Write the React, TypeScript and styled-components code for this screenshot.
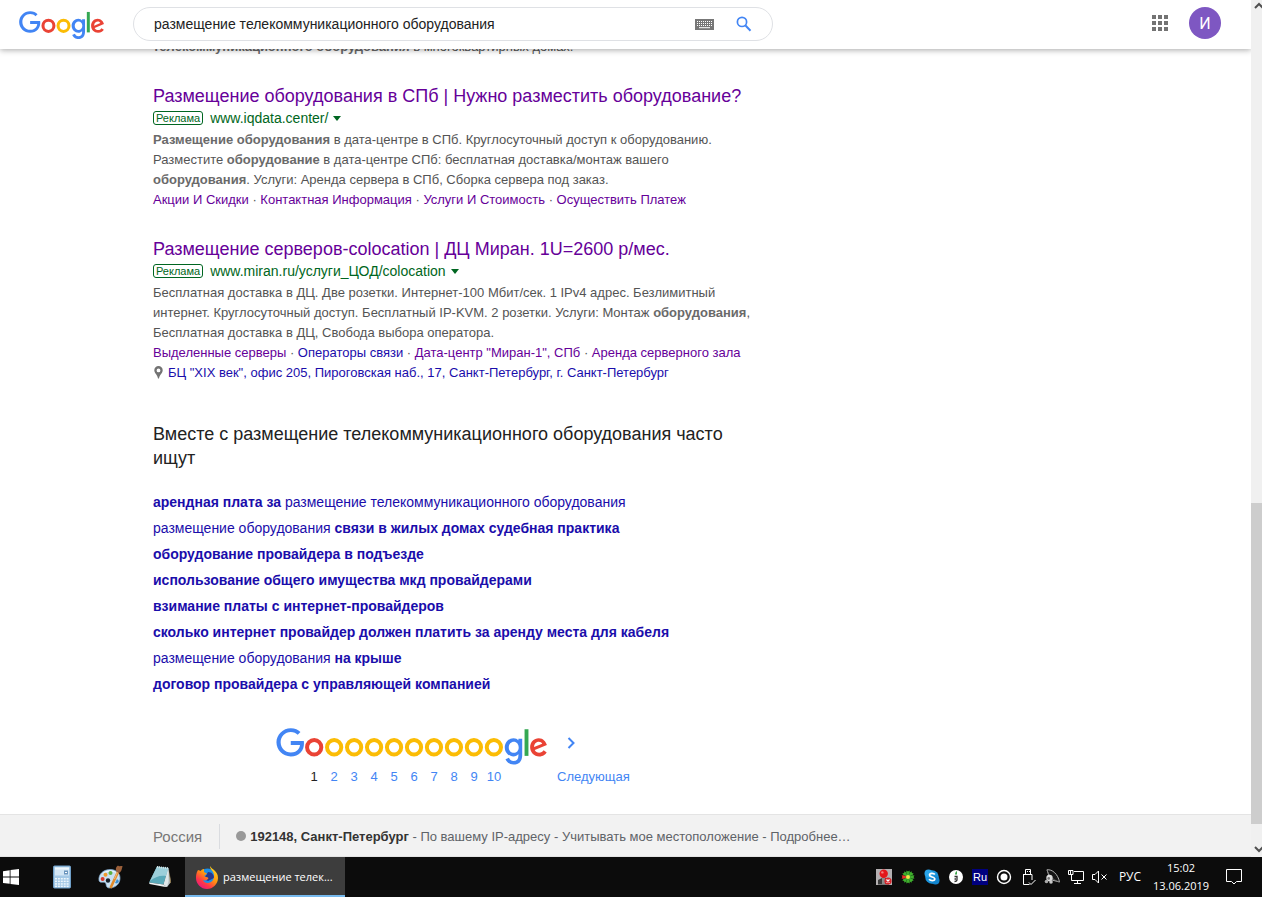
import React from "react";
import styled, { createGlobalStyle } from "styled-components";

const GlobalStyle = createGlobalStyle`
  * { box-sizing: border-box; }
  body { margin: 0; background: #fff; font-family: "Liberation Sans", Arial, sans-serif; overflow: hidden; }
  button { border: 0; padding: 0; background: none; font: inherit; color: inherit; cursor: pointer; }
  a { text-decoration: none; }
  svg { display: block; flex: none; }
  h2, h3, p, ul, ol { margin: 0; padding: 0; font-weight: normal; }
  ul, ol { list-style: none; }
`;

const Desktop = styled.div`
  display: flex;
  flex-direction: column;
  height: 100vh;
`;

const BrowserView = styled.div`
  display: flex;
  flex: 1;
  min-height: 0;
`;

const Page = styled.div`
  display: flex;
  flex-direction: column;
  flex: 1;
  min-width: 0;
  overflow: hidden;
`;

const Header = styled.header`
  position: relative;
  z-index: 1;
  display: flex;
  flex: none;
  align-items: center;
  height: 49px;
  padding: 0 30px 1px 19px;
  background: #fff;
  box-shadow: 0 1px 6px rgba(0, 0, 0, 0.35);
`;

const LogoLink = styled.a`
  width: 114px;
  padding-top: 2px;
`;

const SearchForm = styled.form`
  display: flex;
  align-items: center;
  width: 640px;
  height: 34px;
  padding: 0 20px;
  border: 1px solid #dfe1e5;
  border-radius: 17px;
`;

const SearchInput = styled.input`
  flex: 1;
  min-width: 0;
  padding: 0;
  border: 0;
  outline: 0;
  background: none;
  color: #222;
  font: 14px "Liberation Sans", Arial, sans-serif;
`;

const SearchTool = styled.button`
  margin-left: 22px;
`;

const AccountTools = styled.div`
  display: flex;
  align-items: center;
  gap: 21px;
  margin-left: auto;
  padding-bottom: 2px;
`;

const Avatar = styled.button`
  width: 32px;
  height: 32px;
  border-radius: 50%;
  background: #7e57c2;
  color: #fff;
  font: 16px Roboto, sans-serif;
`;

const Main = styled.main`
  flex: 1;
  min-height: 0;
  margin-top: -12px;
  padding-left: 153px;
`;

const Results = styled.div`
  max-width: 602px;
`;

const Snippet = styled.p`
  color: #545454;
  font-size: 13px;
  line-height: 20px;
  b { color: #6a6a6a; }
`;

const Ad = styled.article`
  margin-top: 27px;
`;

const AdTitle = styled.h3`
  font-size: 18px;
  line-height: 24px;
  white-space: nowrap;
`;

const TextLink = styled.a<{ $visited?: boolean }>`
  color: ${(p) => (p.$visited ? "#609" : "#1a0dab")};
`;

const AdSource = styled.div`
  display: flex;
  align-items: center;
  height: 20px;
  margin-bottom: 2px;
  color: #006621;
  font-size: 14px;
`;

const AdBadge = styled.span`
  height: 14px;
  margin-right: 7px;
  padding: 0 2px;
  border: 1px solid #006621;
  border-radius: 3px;
  font-size: 11px;
  line-height: 13px;
`;

const SourceMenu = styled.button`
  margin-left: 5px;
`;

const AddressRow = styled.div`
  display: flex;
  align-items: center;
  gap: 5px;
  padding-left: 1px;
  font-size: 13px;
  line-height: 20px;
`;

const RelatedHeading = styled.h2`
  margin-top: 39px;
  color: #222;
  font-size: 18px;
  line-height: 24px;
`;

const RelatedList = styled.ul`
  margin-top: 19px;
  font-size: 14px;
  line-height: 26px;
`;

const Pager = styled.nav`
  display: flex;
  gap: 9px;
  margin: 31px 0 28px 123px;
  font-size: 13px;
  line-height: 20px;
`;

const PageNumbers = styled.ol`
  display: flex;
  padding-left: 28px;
`;

const PageNumber = styled.li<{ $current?: boolean }>`
  width: 20px;
  text-align: center;
  a { color: ${(p) => (p.$current ? "#222" : "#4285f4")}; }
`;

const NextLink = styled.a`
  display: flex;
  flex-direction: column;
  justify-content: space-between;
  padding-top: 9px;
  color: #4285f4;
  svg { margin-left: 10px; }
`;

const Footer = styled.footer`
  display: flex;
  flex: none;
  align-items: center;
  height: 43px;
  padding: 1px 0 0 153px;
  border-top: 1px solid #e4e4e4;
  border-bottom: 1px solid #e4e4e4;
  background: #f2f2f2;
  color: #5f6368;
  font-size: 13px;
  white-space: nowrap;
  b { color: #333; }
  a { color: #5f6368; }
`;

const Country = styled.span`
  margin-right: 16px;
  padding-right: 17px;
  border-right: 1px solid #dadce0;
  color: #777;
  font-size: 15px;
  line-height: 25px;
`;

const LocationDot = styled.span`
  width: 10px;
  height: 10px;
  margin-right: 4px;
  border-radius: 50%;
  background: #999;
`;

const ScrollTrack = styled.div`
  display: flex;
  flex-direction: column;
  flex: none;
  width: 11px;
  background: #f0f0f0;
`;

const ScrollArrow = styled.button`
  flex: none;
  height: 17px;
`;

const ScrollThumb = styled.div`
  flex: 321;
  background: #cdcdcd;
`;

const ScrollSpace = styled.div<{ $share: number }>`
  flex: ${(p) => p.$share};
`;

const Taskbar = styled.div`
  display: flex;
  flex: none;
  align-items: stretch;
  height: 40px;
  background: #0c0c0c;
  color: #fff;
  font: 12px/18px "Open Sans", "Noto Sans", sans-serif;
`;

const LaunchButton = styled.button<{ $start?: boolean }>`
  display: flex;
  align-items: center;
  justify-content: center;
  width: ${(p) => (p.$start ? "37px" : "49px")};
  padding-right: ${(p) => (p.$start ? "15px" : "0")};
`;

const WindowButton = styled.button`
  display: flex;
  align-items: center;
  gap: 5px;
  width: 160px;
  padding: 2px 8px 0 11px;
  margin-left: 1px;
  border-bottom: 2px solid #76b9ed;
  background: #3d3d3d;
  font-size: 11px;
  white-space: nowrap;
`;

const Tray = styled.div`
  display: flex;
  align-items: center;
  margin-left: auto;
`;

const TrayButton = styled.button`
  display: flex;
  justify-content: center;
  width: 24px;
`;

const Language = styled.button`
  width: 36px;
`;

const Clock = styled.button`
  width: 66px;
  font-size: 11px;
  text-align: center;
`;

const NoticeButton = styled.button`
  display: flex;
  justify-content: center;
  width: 40px;
  margin-right: 8px;
`;

const G_PATH =
  "M35.29 41.41V32H67c.31 1.64.47 3.58.47 5.68 0 7.06-1.93 15.79-8.15 22.01-6.05 6.3-13.78 9.66-24.02 9.66C16.32 69.35.36 53.89.36 34.91.36 15.93 16.32.47 35.3.47c10.5 0 17.98 4.12 23.6 9.49l-6.64 6.64c-4.03-3.78-9.49-6.72-16.97-6.72-13.86 0-24.7 11.17-24.7 25.03 0 13.86 10.84 25.03 24.7 25.03 8.99 0 14.11-3.61 17.39-6.89 2.66-2.66 4.41-6.46 5.1-11.65l-22.49.01z";
const TAIL_G =
  "M209.75 26.34v39.82c0 16.38-9.66 23.07-21.08 23.07-10.75 0-17.22-7.19-19.66-13.07l8.48-3.53c1.51 3.61 5.21 7.87 11.17 7.87 7.31 0 11.84-4.51 11.84-13v-3.19h-.34c-2.18 2.69-6.38 5.04-11.68 5.04-11.09 0-21.25-9.66-21.25-22.09 0-12.52 10.16-22.26 21.25-22.26 5.29 0 9.49 2.35 11.68 4.96h.34v-3.61h9.25zm-8.56 20.92c0-7.81-5.21-13.52-11.84-13.52-6.72 0-12.35 5.71-12.35 13.52 0 7.73 5.63 13.36 12.35 13.36 6.63 0 11.84-5.63 11.84-13.36z";
const TAIL_E =
  "M262.02 54.48l7.56 5.04c-2.44 3.61-8.32 9.83-18.48 9.83-12.6 0-22.01-9.74-22.01-22.18 0-13.19 9.49-22.18 20.92-22.18 11.51 0 17.14 9.16 18.98 14.11l1.01 2.52-29.65 12.28c2.27 4.45 5.8 6.72 10.75 6.72 4.96 0 8.4-2.44 10.92-6.14zm-23.27-7.98l19.82-8.23c-1.09-2.77-4.37-4.7-8.23-4.7-4.95 0-11.84 4.37-11.59 12.93z";

const Ring = ({ cx, color }: { cx: number; color: string }) => (
  <ellipse cx={cx} cy="47.18" rx="17.4" ry="17.7" fill="none" stroke={color} strokeWidth="9.7" />
);

const LogoTail = () => (
  <>
    <path fill="#4285f4" d={TAIL_G} />
    <path fill="#34a853" d="M225 3v65h-9.5V3z" />
    <path fill="#ea4335" d={TAIL_E} />
  </>
);

const Logo = () => (
  <svg width="85" height="28" viewBox="0 0 270 89" aria-hidden="true">
    <path fill="#4285f4" d={G_PATH} />
    <Ring cx={93.5} color="#ea4335" />
    <Ring cx={141.5} color="#fbbc05" />
    <LogoTail />
  </svg>
);

const PagerLogo = () => (
  <svg width="272" height="39" viewBox="0 0 272 39" aria-hidden="true">
    <g transform="translate(.3 0) scale(.41)">
      <path fill="#4285f4" d={G_PATH} />
      {[0, 1, 2, 3, 4, 5, 6, 7, 8, 9].map((i) => (
        <Ring key={i} cx={92.4 + i * 48.7} color={i ? "#fbbc05" : "#ea4335"} />
      ))}
      <g transform="translate(390 0)">
        <LogoTail />
      </g>
    </g>
  </svg>
);

const KeyboardIcon = () => (
  <svg width="19" height="11" viewBox="0 0 19 11">
    <rect width="19" height="11" fill="#777" />
    <path d="M2 2.5h15M2 4.5h15M2 6.5h15" stroke="#fff" strokeDasharray="1 1" />
    <path d="M4 8.7h11" stroke="#fff" />
  </svg>
);

const SearchIcon = () => (
  <svg width="16" height="16" viewBox="0 0 16 16" fill="none" stroke="#4285f4">
    <circle cx="6" cy="5.9" r="4.6" strokeWidth="1.7" />
    <path d="m9.5 9.5 5 5.2" strokeWidth="2" />
  </svg>
);

const AppsIcon = () => (
  <svg width="16" height="16" viewBox="0 0 16 16" fill="#737373">
    {[0, 6, 12].map((y) => [0, 6, 12].map((x) => <rect key={`${x}-${y}`} x={x} y={y} width="4" height="4" />))}
  </svg>
);

const CaretIcon = () => (
  <svg width="8" height="5" viewBox="0 0 8 5">
    <path d="M0 0h8L4 5z" fill="#006621" />
  </svg>
);

const PinIcon = () => (
  <svg width="9" height="14" viewBox="0 0 9 14">
    <path fillRule="evenodd" fill="#737373" d="M4.500 0A4.200 4.200 0 0 0 .3 4.200C.3 7 3.500 8.800 4 12.500h1c.5-3.700 3.700-5.500 3.700-8.300A4.200 4.200 0 0 0 4.500 0zm0 2.500a1.900 1.900 0 1 1 0 3.800 1.900 1.900 0 0 1 0-3.800z" />
  </svg>
);

const StartIcon = () => (
  <svg width="16" height="16" viewBox="0 0 16 16" fill="#fff">
    <path d="M0 2.200 6.700 1.200v6.300H0zM7.500 1.100 16 0v7.500H7.500zM0 8.400h6.700v6.400L0 13.900zM7.500 8.400H16V16l-8.500-1.100z" />
  </svg>
);

const CalculatorIcon = () => (
  <svg width="18" height="24" viewBox="0 0 18 24">
    <rect x=".5" y="1" width="17" height="22" rx="1" fill="#a5c9e6" stroke="#6f9fc8" />
    <rect x="2" y="2.500" width="14" height="8" fill="#d3e6f5" />
    <path d="M2 2.500h14v2H2z" fill="#eef7fd" />
    <rect x="11" y="5.500" width="4" height="4" fill="#6b95bd" />
    <path d="M12 7.500h2" stroke="#fff" />
    <g fill="#eef7fd">
      {[13, 15.600, 18.200, 20.600].map((y) => [2, 4.900, 7.800, 10.700, 13.600].map((x) => <rect key={`${x}-${y}`} x={x} y={y} width="2" height="1.500" />))}
    </g>
  </svg>
);

const PaintIcon = () => (
  <svg width="25" height="24" viewBox="0 0 25 24">
    <path d="M1 15.500C0 9 6 4 13 4.500c6 .5 9.500 4.500 9 9.500-.6 5.500-5 9-10.500 9-4.500 0-2.500-4.500-4.500-5.500S2 18.500 1 15.500z" fill="#c9e0f2" stroke="#7fa9cf" strokeWidth=".7" />
    <path d="M4 9c3-4 11-5 15-1-5-2-10-2-15 1z" fill="#f4faff" />
    <circle cx="4.600" cy="14" r="2" fill="#d9382b" />
    <circle cx="7.500" cy="9.800" r="2" fill="#ef9a2c" />
    <circle cx="12.500" cy="8" r="2" fill="#5eb142" />
    <circle cx="10" cy="15.500" r="2.200" fill="#16202a" />
    <path d="M17 18c2 1 3 0 4-2l-2-2z" fill="#3b8fd0" />
    <path d="M20 7 12.500 23" stroke="#e08a2b" strokeWidth="2.600" />
    <path d="M20 6 16.500 14" stroke="#f7c98d" strokeWidth=".8" />
    <path d="M18.500 6.500c-1.500-3 0-5 1.500-6 .5 1 2 .5 4.500.5C24 4 23 8 20.500 8z" fill="#9a5f3a" />
  </svg>
);

const NotepadIcon = () => (
  <svg width="24" height="24" viewBox="0 0 24 24">
    <path d="M20 2.500 23 17l-4 5-3-3z" fill="#b9c2c4" />
    <path d="M21 3.500 23 17l-1 1.500z" fill="#8c7447" />
    <path d="M9 1.500 20.500 3 15.500 19.500 1 17.500z" fill="#5aa9b9" />
    <path d="M9 1.500 20.500 3 18 11C12 10 7 12 2 16z" fill="#9ccfda" />
    <path d="m1 17.500 14.500 2 3.500 2.500-3-.3L1.500 19z" fill="#eef2f3" />
    <path d="m20.500 3-5 16.500 3.500 2.500 1.500-6z" fill="#dfe7e9" />
    <path d="m9 2 11.500 1.200" stroke="#d7e2e5" strokeDasharray="1 1" strokeWidth="2" />
  </svg>
);

const FirefoxIcon = () => (
  <svg width="22" height="23" viewBox="0 0 22 23">
    <defs>
      <linearGradient id="fox" x1=".9" y1="0" x2=".2" y2="1">
        <stop offset="0" stopColor="#ffe226" />
        <stop offset=".45" stopColor="#ff980e" />
        <stop offset=".75" stopColor="#ff3647" />
        <stop offset="1" stopColor="#e31587" />
      </linearGradient>
    </defs>
    <circle cx="11.500" cy="10.500" r="8" fill="#1c8fe6" />
    <path d="M12 6c4 0 6 3 6 6l-6 3-4-2z" fill="#28388c" />
    <path fill="url(#fox)" d="M14 0c0 3 2 4 3 6 2 4 1 8-2 10-3 2-7 1-8-2 2 1 4 0 5-1s0-2-2-2c-1 0-2-1-1-2l2-1c0-1-2-1-3-2l0-3C6 3 5 4 5 5L2 4C0 7 0 10 0 12c0 6 5 11 11 11s11-5 11-11c0-4-2-6-4-8-1-1-3-2-4-4z" />
  </svg>
);

const trayIcons: { name: string; drawing: React.ReactNode }[] = [
  {
    name: "Удалённый доступ",
    drawing: (
      <>
        <rect width="16" height="16" fill="#b4b0b2" />
        <path d="M2 15.500V11l4-2h4l3 3v3.500z" fill="#3c3c3c" />
        <path d="M6 8h3v7H6z" fill="#8a8a8a" />
        <circle cx="7.700" cy="4.800" r="4.200" fill="#e3171b" />
        <circle cx="6.400" cy="3.400" r="1.200" fill="#f47f7f" />
        <circle cx="12" cy="12" r="3.600" fill="#d8262c" />
        <path d="m10.500 10.500 3 3m0-3-3 3" stroke="#fff" strokeWidth="1.200" />
      </>
    ),
  },
  {
    name: "ICQ",
    drawing: (
      <>
        {[0, 45, 90, 135, 180, 225, 270, 315].map((a) => (
          <path key={a} d="M8 8 6.200 3.500 6.500 1.500 8 2.500 9.500 1.500 9.800 3.500z" fill={a === 270 ? "#e8352b" : "#3fb02d"} transform={`rotate(${a} 8 8)`} />
        ))}
        <circle cx="8" cy="8" r="2" fill="#f6e84b" />
      </>
    ),
  },
  {
    name: "Skype",
    drawing: (
      <>
        <circle cx="8" cy="8" r="6.800" fill="#1a94dc" />
        <circle cx="4.500" cy="4.500" r="4" fill="#2aa5ea" />
        <circle cx="11.500" cy="11.500" r="4" fill="#1284cd" />
        <path d="M10.800 5.500C10 4 5.500 3.800 5.500 6c0 2.500 5.300 1.400 5.300 4 0 2.300-5 2-5.600 0" fill="none" stroke="#fff" strokeWidth="1.700" />
      </>
    ),
  },
  {
    name: "Сведения",
    drawing: (
      <>
        <circle cx="8" cy="8" r="7" fill="#fff" />
        <path d="M7 5.500c0-2 1-3 2-3.500v3.500z" fill="#3da34a" />
        <path d="M6.500 7.500h2.500v3c0 1.500-.8 2-2.500 2M6.500 10h1.500" fill="none" stroke="#333" strokeWidth="1.300" />
      </>
    ),
  },
  {
    name: "Раскладка Ru",
    drawing: (
      <>
        <rect width="16" height="16" fill="#00007f" />
        <text x="8" y="12" fill="#fff" fontSize="11" textAnchor="middle" fontFamily="Liberation Sans, sans-serif">Ru</text>
      </>
    ),
  },
  {
    name: "Запись",
    drawing: (
      <>
        <circle cx="8" cy="8" r="6.500" fill="none" stroke="#fff" strokeWidth="1.400" />
        <circle cx="8" cy="8" r="3.500" fill="#fff" />
      </>
    ),
  },
  {
    name: "Безопасное извлечение",
    drawing: (
      <path d="M5.500 5V.5h5V5M7 2.500h1M9 2.500h1M3.500 5.500h8.500V11M3.500 5V15.500h6M9 13.500l2 2 4.500-4.500" fill="none" stroke="#fff" />
    ),
  },
  {
    name: "Звуковая карта",
    drawing: (
      <>
        <path d="M3 .8C8 0 14 5 15.500 13L6 10.500z" fill="#161616" stroke="#b0b0b0" strokeWidth="1" />
        <path d="M3 .8C4 5 8 11 15.500 13" fill="none" stroke="#777" strokeWidth=".8" />
        <circle cx="5.500" cy="9" r="3.200" fill="#ddd" />
        <circle cx="4.700" cy="9.400" r="1.300" fill="#777" />
        <circle cx="2.500" cy="12.500" r="1.800" fill="#aaa" />
        <circle cx="7" cy="13" r="1.800" fill="#c8c8c8" />
      </>
    ),
  },
  {
    name: "Сеть",
    drawing: (
      <path d="M6 2.500h9.500v9H3.500V6M9.500 11.500v3M6 14.500h7M.5 1.500h4.500v4H.5zM2.500 2v3" fill="none" stroke="#fff" />
    ),
  },
  {
    name: "Звук выключен",
    drawing: <path d="M.5 5.500h2.500L6.500 2v12L3 10.500H.5zM9.500 5.500l5 5m0-5-5 5" fill="none" stroke="#fff" />,
  },
];

const relatedSearches: React.ReactNode[] = [
  <><b>арендная плата за</b> размещение телекоммуникационного оборудования</>,
  <>размещение оборудования <b>связи в жилых домах судебная практика</b></>,
  <b>оборудование провайдера в подъезде</b>,
  <b>использование общего имущества мкд провайдерами</b>,
  <b>взимание платы с интернет-провайдеров</b>,
  <b>сколько интернет провайдер должен платить за аренду места для кабеля</b>,
  <>размещение оборудования <b>на крыше</b></>,
  <b>договор провайдера с управляющей компанией</b>,
];

const SiteLinks = ({ links }: { links: { text: string; visited: boolean }[] }) => (
  <Snippet>
    {links.map((link, i) => (
      <React.Fragment key={link.text}>
        {i > 0 && " · "}
        <TextLink href="#" $visited={link.visited}>{link.text}</TextLink>
      </React.Fragment>
    ))}
  </Snippet>
);

const Source = ({ url }: { url: string }) => (
  <AdSource>
    <AdBadge>Реклама</AdBadge>
    <span>{url}</span>
    <SourceMenu type="button" aria-label="Подробнее об объявлении"><CaretIcon /></SourceMenu>
  </AdSource>
);

export default function App() {
  return (
    <Desktop>
      <GlobalStyle />
      <BrowserView>
        <Page>
          <Header>
            <LogoLink href="#" aria-label="Google"><Logo /></LogoLink>
            <SearchForm role="search" onSubmit={(e) => e.preventDefault()}>
              <SearchInput aria-label="Поиск" defaultValue="размещение телекоммуникационного оборудования" />
              <SearchTool type="button" aria-label="Экранная клавиатура"><KeyboardIcon /></SearchTool>
              <SearchTool type="submit" aria-label="Найти"><SearchIcon /></SearchTool>
            </SearchForm>
            <AccountTools>
              <button type="button" aria-label="Приложения Google"><AppsIcon /></button>
              <Avatar type="button" aria-label="Аккаунт">И</Avatar>
            </AccountTools>
          </Header>

          <Main>
            <Results>
              <Snippet><b>телекоммуникационного оборудования</b> в многоквартирных домах.</Snippet>

              <Ad>
                <AdTitle><TextLink href="#" $visited>Размещение оборудования в СПб | Нужно разместить оборудование?</TextLink></AdTitle>
                <Source url="www.iqdata.center/" />
                <Snippet>
                  <b>Размещение оборудования</b> в дата-центре в СПб. Круглосуточный доступ к оборудованию.<br />
                  Разместите <b>оборудование</b> в дата-центре СПб: бесплатная доставка/монтаж вашего<br />
                  <b>оборудования</b>. Услуги: Аренда сервера в СПб, Сборка сервера под заказ.
                </Snippet>
                <SiteLinks
                  links={[
                    { text: "Акции И Скидки", visited: true },
                    { text: "Контактная Информация", visited: true },
                    { text: "Услуги И Стоимость", visited: true },
                    { text: "Осуществить Платеж", visited: true },
                  ]}
                />
              </Ad>

              <Ad>
                <AdTitle><TextLink href="#" $visited>Размещение серверов-colocation | ДЦ Миран. 1U=2600 р/мес.</TextLink></AdTitle>
                <Source url="www.miran.ru/услуги_ЦОД/colocation" />
                <Snippet>
                  Бесплатная доставка в ДЦ. Две розетки. Интернет-100 Мбит/сек. 1 IPv4 адрес. Безлимитный<br />
                  интернет. Круглосуточный доступ. Бесплатный IP-KVM. 2 розетки. Услуги: Монтаж <b>оборудования</b>,<br />
                  Бесплатная доставка в ДЦ, Свобода выбора оператора.
                </Snippet>
                <SiteLinks
                  links={[
                    { text: "Выделенные серверы", visited: true },
                    { text: "Операторы связи", visited: false },
                    { text: "Дата-центр \"Миран-1\", СПб", visited: true },
                    { text: "Аренда серверного зала", visited: true },
                  ]}
                />
                <AddressRow>
                  <PinIcon />
                  <TextLink href="#">БЦ "XIX век", офис 205, Пироговская наб., 17, Санкт-Петербург, г. Санкт-Петербург</TextLink>
                </AddressRow>
              </Ad>

              <RelatedHeading>Вместе с размещение телекоммуникационного оборудования часто ищут</RelatedHeading>
              <RelatedList>
                {relatedSearches.map((query, i) => (
                  <li key={i}><TextLink href="#">{query}</TextLink></li>
                ))}
              </RelatedList>

              <Pager aria-label="Страницы результатов">
                <div>
                  <PagerLogo />
                  <PageNumbers>
                    {[1, 2, 3, 4, 5, 6, 7, 8, 9, 10].map((n) => (
                      <PageNumber key={n} $current={n === 1}><a href="#">{n}</a></PageNumber>
                    ))}
                  </PageNumbers>
                </div>
                <NextLink href="#">
                  <svg width="9" height="12" viewBox="0 0 9 12" fill="none" stroke="#4285f4" strokeWidth="2" aria-hidden="true">
                    <path d="m1.500 1 5 5-5 5" />
                  </svg>
                  <span>Следующая</span>
                </NextLink>
              </Pager>
            </Results>
          </Main>

          <Footer>
            <Country>Россия</Country>
            <LocationDot />
            <span>
              <b>192148, Санкт-Петербург</b> - По вашему IP-адресу - <a href="#">Учитывать мое местоположение</a> - <a href="#">Подробнее…</a>
            </span>
          </Footer>
        </Page>

        <ScrollTrack>
          <ScrollArrow type="button" aria-label="Прокрутить вверх">
            <svg width="11" height="17" viewBox="0 0 11 17" fill="none" stroke="#505050" strokeWidth="2"><path d="m4 8 4-4 4 4" /></svg>
          </ScrollArrow>
          <ScrollSpace $share={486} />
          <ScrollThumb />
          <ScrollSpace $share={16} />
          <ScrollArrow type="button" aria-label="Прокрутить вниз">
            <svg width="11" height="17" viewBox="0 0 11 17" fill="none" stroke="#505050" strokeWidth="2"><path d="m4 7 4 4 4-4" /></svg>
          </ScrollArrow>
        </ScrollTrack>
      </BrowserView>

      <Taskbar>
        <LaunchButton type="button" $start aria-label="Пуск"><StartIcon /></LaunchButton>
        <LaunchButton type="button" aria-label="Калькулятор"><CalculatorIcon /></LaunchButton>
        <LaunchButton type="button" aria-label="Paint"><PaintIcon /></LaunchButton>
        <LaunchButton type="button" aria-label="Блокнот"><NotepadIcon /></LaunchButton>
        <WindowButton type="button"><FirefoxIcon />размещение телек...</WindowButton>
        <Tray>
          {trayIcons.map((icon) => (
            <TrayButton key={icon.name} type="button" aria-label={icon.name}>
              <svg width="16" height="16" viewBox="0 0 16 16">{icon.drawing}</svg>
            </TrayButton>
          ))}
          <Language type="button">РУС</Language>
          <Clock type="button">15:02<br />13.06.2019</Clock>
          <NoticeButton type="button" aria-label="Уведомления">
            <svg width="16" height="16" viewBox="0 0 16 16" fill="none" stroke="#fff"><path d="M.5.5h15v12h-5L8 15l-2.500-2.500h-5z" /></svg>
          </NoticeButton>
        </Tray>
      </Taskbar>
    </Desktop>
  );
}
